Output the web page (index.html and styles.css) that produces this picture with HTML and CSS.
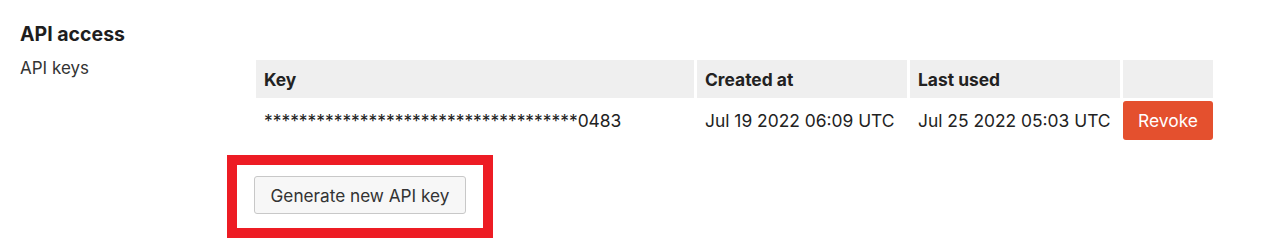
FILE: index.html
```html
<!DOCTYPE html>
<html lang="en">
<head>
  <meta charset="UTF-8" />
  <title>API access</title>
  <link rel="stylesheet" href="styles.css">
</head>
<body>
  <section class="settings-section">
    <h2>API access</h2>
    <div class="settings-row">
      <div class="settings-label">API keys</div>
      <div class="settings-content">
        <table class="keys-table">
          <thead>
            <tr>
              <th class="col-key">Key</th>
              <th class="col-date">Created at</th>
              <th class="col-date">Last used</th>
              <th class="col-action"></th>
            </tr>
          </thead>
          <tbody>
            <tr>
              <td>************************************0483</td>
              <td>Jul 19 2022 06:09 UTC</td>
              <td>Jul 25 2022 05:03 UTC</td>
              <td><button class="btn-revoke">Revoke</button></td>
            </tr>
          </tbody>
        </table>
        <div class="highlight">
          <button class="btn-default">Generate new API key</button>
        </div>
      </div>
    </div>
  </section>
</body>
</html>
```

FILE: styles.css
```css
body {
  margin: 0;
  padding: 0;
  background: #fff;
  color: #222;
  font-family: Inter, "Noto Sans", sans-serif;
}
.settings-section {
  padding: 21px 20px 0;
}
.settings-section h2 {
  margin: 0 0 9px;
  font-size: 19.5px;
  font-weight: 700;
  line-height: 26px;
  color: #1e1e1e;
}
.settings-row {
  display: flex;
}
.settings-label {
  width: 233px;
  flex-shrink: 0;
  font-size: 17px;
  line-height: 24px;
  color: #333;
}
.keys-table {
  border-collapse: separate;
  border-spacing: 3px;
  margin-top: 1px;
  font-size: 17.4px;
}
.keys-table th {
  background: #efefef;
  text-align: left;
  font-weight: 700;
  height: 38px;
  padding: 0 8px;
  color: #222;
}
.keys-table td {
  height: 39px;
  padding: 0 8px;
  color: #222;
}
.keys-table th:last-child,
.keys-table td:last-child {
  padding: 0;
}
.col-key { width: 422px; }
.col-date { width: 194px; }
.col-action { width: 90px; }
.btn-revoke {
  display: block;
  width: 90px;
  height: 39px;
  background: #e4502e;
  color: #fff;
  border: none;
  border-radius: 3px;
  font-family: inherit;
  font-size: 17.4px;
}
.highlight {
  display: inline-block;
  margin: 12px 0 0 -26px;
  border: 10px solid #ed1c24;
  padding: 11px 17px 14px;
}
.btn-default {
  display: block;
  width: 212px;
  height: 38px;
  background: #f7f7f7;
  border: 1px solid #c8c8c8;
  border-radius: 3px;
  color: #333;
  font-family: inherit;
  font-size: 17.2px;
}
```
